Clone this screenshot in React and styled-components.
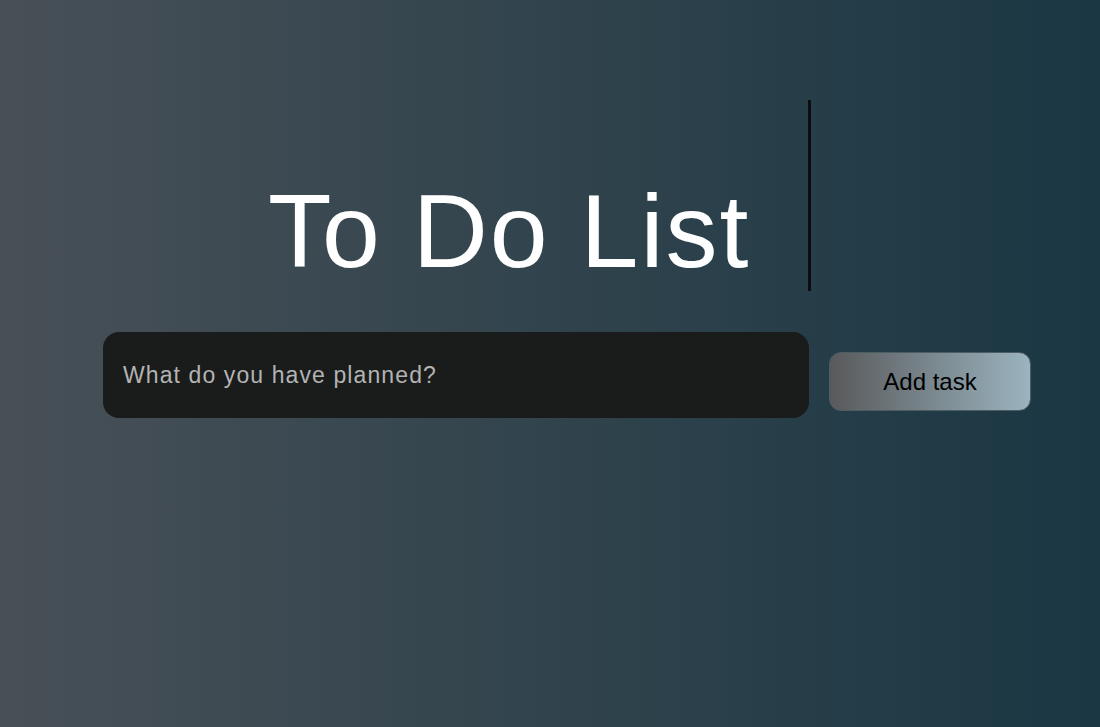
import React, { useState } from 'react';
import styled, { createGlobalStyle } from 'styled-components';

const GlobalStyle = createGlobalStyle`
  html, body {
    margin: 0;
    padding: 0;
    height: 100%;
  }
  body {
    font-family: "Liberation Sans", Arial, sans-serif;
  }
  #root {
    min-height: 100vh;
  }
`;

const Page = () => {
    const [task, setTask] = useState('');

    return (
        <Wrapper>
            <GlobalStyle />
            <Content>
                <TitleRow>
                    <Title>To Do List</Title>
                </TitleRow>
                <Form onSubmit={e => e.preventDefault()}>
                    <TaskInput
                        type="text"
                        value={task}
                        placeholder="What do you have planned?"
                        onChange={e => setTask(e.target.value)}
                    />
                    <AddButton type="submit">Add task</AddButton>
                </Form>
            </Content>
        </Wrapper>
    );
};

export default Page;

// Styled Components
const Wrapper = styled.div`
    min-height: 100vh;
    background: linear-gradient(to right, #485057, #1a3743);
    overflow: hidden;
`;

const Content = styled.div`
    width: 928px;
    margin-left: 103px;
    padding-top: 100px;
`;

const TitleRow = styled.div`
    padding-left: 165px;
`;

const Title = styled.h1`
    display: inline-block;
    margin: 0;
    padding: 72px 58px 0 0;
    font-size: 104px;
    font-weight: 400;
    line-height: 119px;
    letter-spacing: 2px;
    color: #ffffff;
    white-space: nowrap;
    overflow: hidden;
    border-right: 3px solid #0b0d0e;
`;

const Form = styled.form`
    display: flex;
    align-items: flex-start;
    gap: 20px;
    margin-top: 37px;
`;

const TaskInput = styled.input`
    box-sizing: border-box;
    width: 706px;
    height: 86px;
    padding: 0 20px;
    border: none;
    border-radius: 16px;
    background: #1a1c1b;
    color: #e8e8e8;
    font-family: "Liberation Sans", Arial, sans-serif;
    font-size: 23px;
    letter-spacing: 1.1px;
    outline: none;

    &::placeholder {
        color: #b3b3b3;
    }
`;

const AddButton = styled.button`
    box-sizing: border-box;
    width: 202px;
    height: 59px;
    margin-top: 20px;
    border: 1px solid #4d5d64;
    border-radius: 12px;
    background: linear-gradient(to right, #58595b, #9bb4bf);
    color: #000000;
    font-family: "Liberation Sans", Arial, sans-serif;
    font-size: 24px;
    cursor: pointer;
`;
